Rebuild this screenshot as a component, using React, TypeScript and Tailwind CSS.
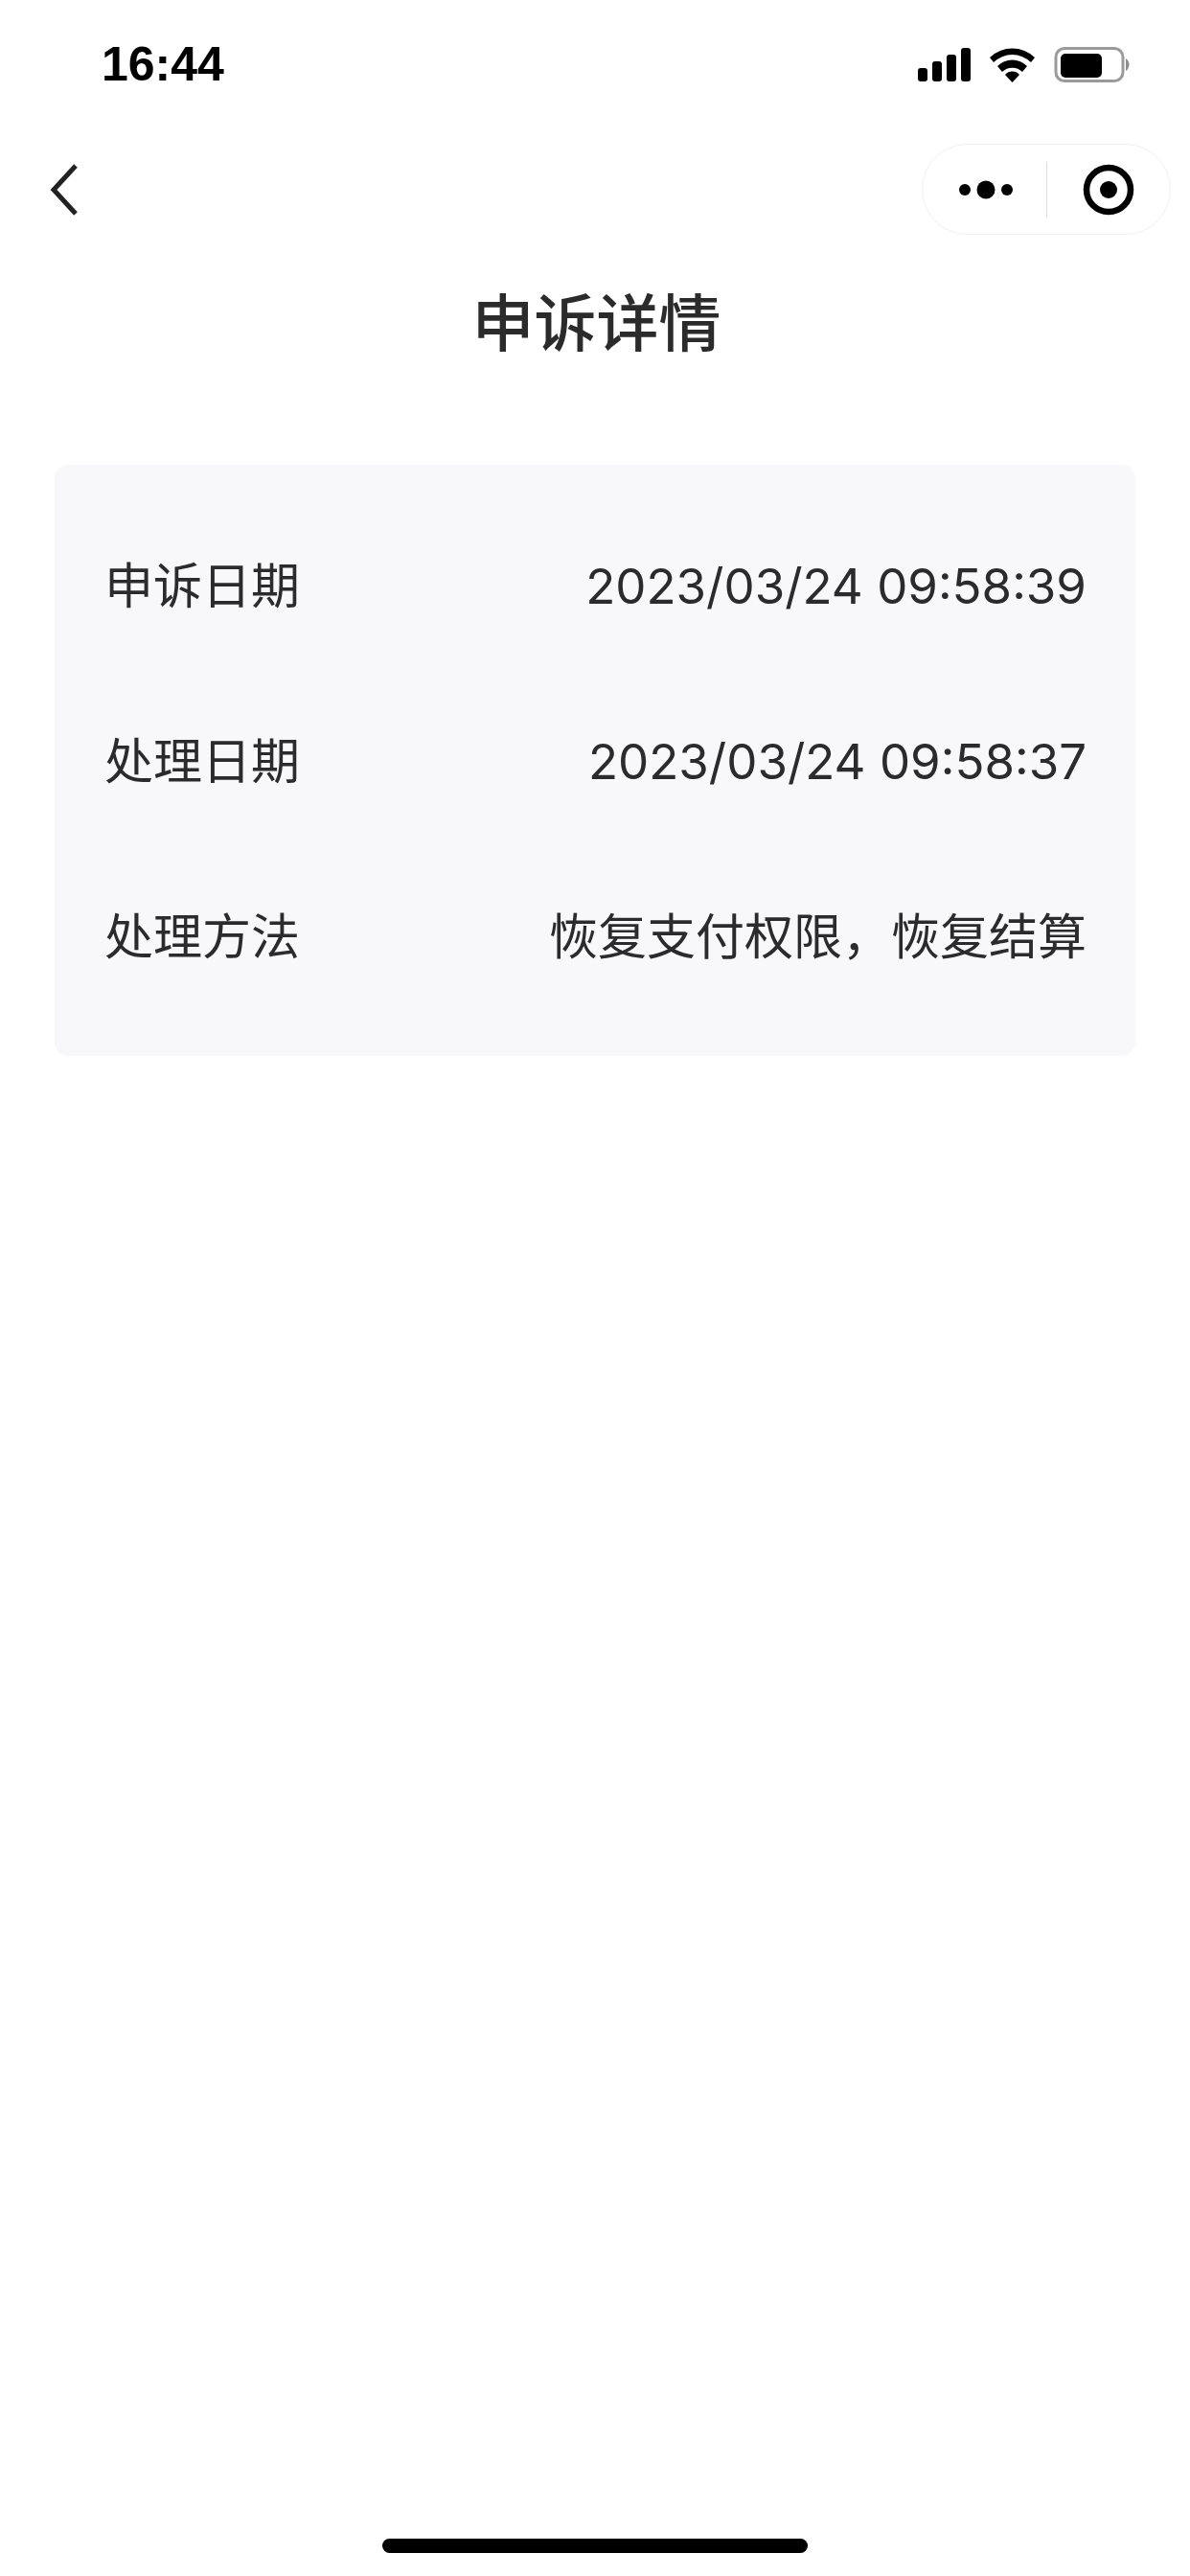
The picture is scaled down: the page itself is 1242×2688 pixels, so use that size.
import React from 'react';

const details = [
  { label: '申诉日期', value: '2023/03/24 09:58:39' },
  { label: '处理日期', value: '2023/03/24 09:58:37' },
  { label: '处理方法', value: '恢复支付权限，恢复结算' },
];

const StatusIcons = () => (
  <svg width="222" height="40" viewBox="0 0 222 40" className="block">
    {/* signal */}
    <rect x="1" y="24" width="10" height="14" rx="3" fill="#000" />
    <rect x="16" y="17" width="10" height="21" rx="3" fill="#000" />
    <rect x="31" y="10" width="10" height="28" rx="3" fill="#000" />
    <rect x="46" y="3" width="10" height="35" rx="3" fill="#000" />
    {/* wifi */}
    <path d="M76 13 A34 34 0 0 1 123 13 L119 18 A28 28 0 0 0 80 18 Z" fill="#000" />
    <path d="M84 22 A22 22 0 0 1 115 22 L110 28 A15 15 0 0 0 89 28 Z" fill="#000" />
    <path d="M92 31 A10 10 0 0 1 107 31 L99.500 39 Z" fill="#000" />
    {/* battery */}
    <rect x="145" y="3.500" width="70" height="34" rx="9" fill="none" stroke="#9a9a9a" strokeWidth="3" />
    <rect x="150" y="9" width="43" height="25" rx="5" fill="#000" />
    <path d="M218 14 C220 15 221.500 18 221.500 20.500 C221.500 23 220 26 218 27 Z" fill="#8e8e8e" />
  </svg>
);

export default function App() {
  return (
    <div className="flex min-h-[2688px] flex-col bg-white font-['Inter','Noto_Sans_CJK_SC',sans-serif] text-[#2b2b2d]">
      {/* status bar */}
      <div className="flex h-[134px] items-center justify-between pl-[106px] pr-[63px]">
        <span className="font-['Liberation_Sans',sans-serif] text-[50px] leading-none font-bold text-black">16:44</span>
        <StatusIcons />
      </div>

      {/* nav bar */}
      <div className="flex h-[111px] items-center justify-between pt-4 pl-[52px] pr-[20px]">
        <svg width="30" height="54" viewBox="0 0 30 54" className="block">
          <path d="M27 2 L4 27 L27 52" fill="none" stroke="#222" strokeWidth="5" />
        </svg>
        <div className="flex h-[95px] w-[260px] items-center rounded-full border border-[#efefef] bg-white">
          <div className="flex h-full w-[129px] items-center justify-center pl-[8px]">
            <svg width="64" height="20" viewBox="0 0 64 20" className="block">
              <circle cx="7" cy="10" r="6" fill="#000" />
              <circle cx="29" cy="10" r="9.500" fill="#000" />
              <circle cx="51" cy="10" r="6" fill="#000" />
            </svg>
          </div>
          <div className="h-[58px] w-px bg-[#dcdcdc]" />
          <div className="flex h-full flex-1 items-center justify-center">
            <svg width="54" height="54" viewBox="0 0 54 54" className="block">
              <circle cx="27" cy="27" r="23" fill="none" stroke="#000" strokeWidth="6.500" />
              <circle cx="27" cy="27" r="9" fill="#000" />
            </svg>
          </div>
        </div>
      </div>

      <h1 className="mt-[53px] mb-[107px] pl-[3px] text-center text-[65px] leading-[80px] font-medium text-[#2b2b2b]">申诉详情</h1>

      {/* details */}
      <div className="ml-[57px] mr-[57px] rounded-[14px] bg-[#f8f8fa] pt-[35px] pb-[33px] pl-[52px] pr-[51px]">
        {details.map((item) => (
          <div key={item.label} className="flex h-[183px] items-center justify-between text-[51px] leading-none">
            <span>{item.label}</span>
            <span>{item.value}</span>
          </div>
        ))}
      </div>

      {/* home indicator */}
      <div className="mt-auto flex justify-center pb-[24px]">
        <div className="h-[15px] w-[444px] rounded-full bg-black" />
      </div>
    </div>
  );
}
